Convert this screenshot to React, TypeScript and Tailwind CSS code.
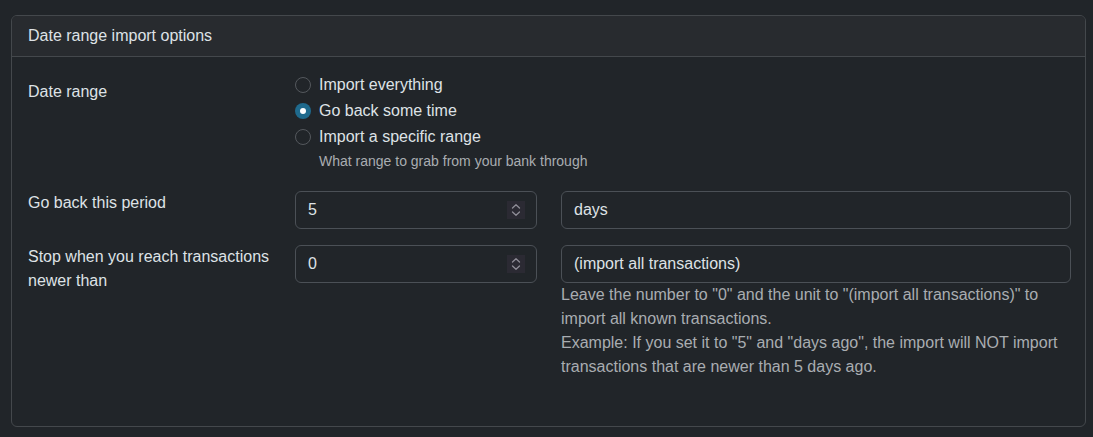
import type { ReactNode } from 'react';

const font = { fontFamily: '"Liberation Sans", Arial, Helvetica, sans-serif' };

export default function App() {
  return (
    <div className="min-h-screen bg-[#212529] pt-[15px] pl-[11px] pr-[7px] pb-[10px] text-[#dee2e6]" style={font}>
      <div className="border border-[#44484c] rounded-[6px] overflow-hidden">
        <div className="bg-[#282b2f] border-b border-[#44484c] px-4 py-2 text-[16px] leading-6">
          Date range import options
        </div>

        <div className="pl-4 pr-[14px] pt-4 pb-[47px]">
          <div className="flex mb-[19px]">
            <div className="w-[267px] shrink-0 pt-[7px] text-[16px] leading-6">Date range</div>
            <div className="flex flex-col">
              <Radio label="Import everything" />
              <Radio label="Go back some time" checked />
              <Radio label="Import a specific range" />
              <p className="pl-6 text-[14px] leading-[21px] text-[#a9adb1]">
                What range to grab from your bank through
              </p>
            </div>
          </div>

          <div className="flex mb-4">
            <div className="w-[267px] shrink-0 pr-3 text-[16px] leading-6">Go back this period</div>
            <div className="w-[242px] shrink-0">
              <NumberInput value="5" />
            </div>
            <div className="flex-1 ml-6">
              <TextInput value="days" />
            </div>
          </div>

          <div className="flex">
            <div className="w-[267px] shrink-0 pr-6 text-[16px] leading-6">
              Stop when you reach transactions newer than
            </div>
            <div className="w-[242px] shrink-0">
              <NumberInput value="0" />
            </div>
            <div className="flex-1 ml-6">
              <TextInput value="(import all transactions)" />
              <p className="text-[16px] leading-6 text-[#a9adb1]">
                Leave the number to "0" and the unit to "(import all transactions)" to import all known transactions.
                <br />
                Example: If you set it to "5" and "days ago", the import will NOT import transactions that are newer than 5 days ago.
              </p>
            </div>
          </div>
        </div>
      </div>
    </div>
  );
}

function Radio({ label, checked = false }: { label: string; checked?: boolean }) {
  return (
    <div className="flex items-center h-6 mb-[2px] text-[16px] leading-6">
      <span
        className={
          checked
            ? 'w-4 h-4 rounded-full bg-[#1f6a8d] flex items-center justify-center shrink-0'
            : 'w-4 h-4 rounded-full border border-[#54585d] shrink-0'
        }
      >
        {checked && <span className="w-[6px] h-[6px] rounded-full bg-white" />}
      </span>
      <span className="ml-2">{label}</span>
    </div>
  );
}

function Box({ children }: { children: ReactNode }) {
  return (
    <div className="h-[38px] border border-[#4b5056] rounded-[6px] flex items-center pl-[12px] pr-[11px] text-[16px]">
      {children}
    </div>
  );
}

function NumberInput({ value }: { value: string }) {
  return (
    <Box>
      <span className="flex-1">{value}</span>
      <span className="w-[18px] h-[18px] bg-[#2b2a33] flex items-center justify-center">
        <svg width="18" height="18" viewBox="0 0 18 18" fill="none">
          <path d="M5.5 7 L9 3.8 L12.5 7" stroke="#8f8d97" strokeWidth="1.3" strokeLinecap="round" strokeLinejoin="round" />
          <path d="M5.5 11 L9 14.2 L12.5 11" stroke="#8f8d97" strokeWidth="1.3" strokeLinecap="round" strokeLinejoin="round" />
        </svg>
      </span>
    </Box>
  );
}

function TextInput({ value }: { value: string }) {
  return (
    <Box>
      <span>{value}</span>
    </Box>
  );
}
